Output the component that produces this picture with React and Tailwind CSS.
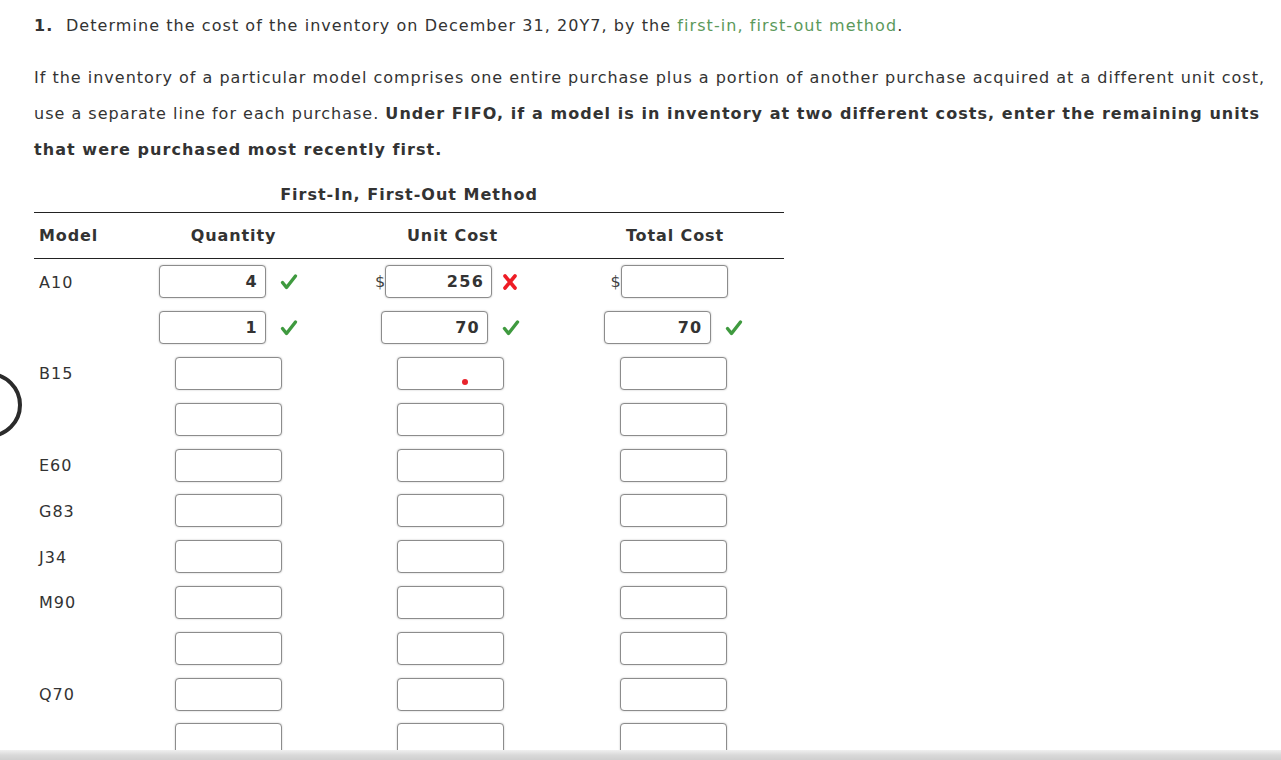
import React from 'react';

const Check = () => (
  <svg width="18" height="18" viewBox="0 0 18 18" className="shrink-0">
    <path d="M2.5 9.5 L6.5 14.5 L15.5 3" fill="none" stroke="#3f9a3f" strokeWidth="3.4" strokeLinecap="round" strokeLinejoin="round" />
  </svg>
);

const Cross = () => (
  <svg width="16" height="16" viewBox="0 0 16 16" className="shrink-0">
    <path d="M3 2 L13 14 M13 2 L3 14" fill="none" stroke="#ee1c25" strokeWidth="3.6" strokeLinecap="round" />
  </svg>
);

const Field = ({ value, dollar, mark, dot }) => (
  <div className={`flex items-center justify-center ${dollar ? 'pr-[8px]' : ''}`}>
    {dollar && <span className="text-[#444] tracking-normal">$</span>}
    <div className="relative h-[33px] w-[107px] rounded-[4px] border border-[#8c8c8c] bg-white shadow-[0_0_2px_rgba(0,0,0,0.25)] flex items-center justify-end pr-[7px] font-bold text-[#333] tracking-[1.3px]">
      {value}
      {dot && <span className="absolute left-[64px] top-[21px] h-[6px] w-[6px] rounded-full bg-[#e8242c]" />}
    </div>
    {mark === 'ok' && <span className="ml-[14px]"><Check /></span>}
    {mark === 'bad' && <span className="ml-[10px]"><Cross /></span>}
  </div>
);

const rows = [
  { model: 'A10', q: { value: '4', mark: 'ok' }, u: { value: '256', dollar: true, mark: 'bad' }, t: { dollar: true } },
  { model: '', q: { value: '1', mark: 'ok' }, u: { value: '70', mark: 'ok' }, t: { value: '70', mark: 'ok' } },
  { model: 'B15', q: {}, u: { dot: true }, t: {} },
  { model: '', q: {}, u: {}, t: {} },
  { model: 'E60', q: {}, u: {}, t: {} },
  { model: 'G83', q: {}, u: {}, t: {} },
  { model: 'J34', q: {}, u: {}, t: {} },
  { model: 'M90', q: {}, u: {}, t: {} },
  { model: '', q: {}, u: {}, t: {} },
  { model: 'Q70', q: {}, u: {}, t: {} },
  { model: '', q: {}, u: {}, t: {} },
];

export default function App() {
  return (
    <div className="relative min-h-screen bg-white text-[16px] text-[#333] tracking-[1px] font-['DejaVu_Sans',Verdana,sans-serif]">
      <div className="px-[34px] pt-[15px]">
        {/* question */}
        <p className="leading-[22px] whitespace-nowrap tracking-[1.06px]">
          <b className="tracking-[1.2px]">1.</b>&nbsp; Determine the cost of the inventory on December 31, 20Y7, by the{' '}
          <span className="text-[#5b995b]">first-in, first-out method</span>.
        </p>

        <div className="mt-[23px] leading-[36px] whitespace-nowrap">
          <div className="tracking-[1px]">
            If the inventory of a particular model comprises one entire purchase plus a portion of another purchase acquired at a different unit cost,
          </div>
          <div className="tracking-[1px]">
            use a separate line for each purchase. <b className="tracking-[1.05px]">Under FIFO, if a model is in inventory at two different costs, enter the remaining units</b>
          </div>
          <div>
            <b className="tracking-[1.05px]">that were purchased most recently first.</b>
          </div>
        </div>

        {/* table */}
        <div className="mt-[14px] w-[750px]">
          <div className="text-center font-bold leading-[26px] tracking-[1px]">First-In, First-Out Method</div>
          <div className="mt-[4px] border-t border-[#222]" />
          <div className="grid grid-cols-[84px_221px_223px_222px] h-[45px] items-center font-bold tracking-[0.9px]">
            <div className="pl-[5px]">Model</div>
            <div className="text-center pl-[10px]">Quantity</div>
            <div className="text-center pl-[4px]">Unit Cost</div>
            <div className="text-center pl-[4px]">Total Cost</div>
          </div>
          <div className="border-t border-[#222]" />

          {rows.map((r, i) => (
            <div key={i} className="grid grid-cols-[84px_221px_223px_222px] h-[45.8px] items-center">
              <div className="pl-[5px] pt-[2px]">{r.model}</div>
              <Field {...r.q} />
              <Field {...r.u} />
              <Field {...r.t} />
            </div>
          ))}
        </div>
      </div>

      {/* side nav ring */}
      <div className="absolute left-[-44px] top-[372px] h-[66px] w-[66px] rounded-full border-[4px] border-[#2b2b2b]" />

      {/* bottom shade */}
      <div className="fixed bottom-0 left-0 right-0 h-[10px] bg-gradient-to-b from-[#f0f0f0] via-[#d9d9d9] to-[#cfcfcf]" />
    </div>
  );
}
